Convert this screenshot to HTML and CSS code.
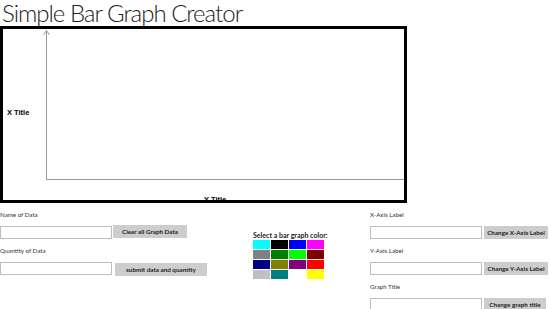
FILE: index.html
```html
<!DOCTYPE html>
<html lang="en">
<head>
  <meta charset="UTF-8">
  <title>Simple Bar Graph Creator</title>
  <link rel="stylesheet" href="styles.css">
</head>
<body>
  <h1 class="page-title">Simple Bar Graph Creator</h1>

  <div class="graph-box">
    <svg class="graph" width="401" height="171" viewBox="0 0 401 171">
      <line x1="43.5" y1="2" x2="43.5" y2="150.5" stroke="#9a9a9a" stroke-width="1"/>
      <line x1="43" y1="150.5" x2="401" y2="150.5" stroke="#9a9a9a" stroke-width="1"/>
      <path d="M40.5 6 L43.5 1.5 L46.5 6" fill="none" stroke="#9a9a9a" stroke-width="1"/>
      <text x="4" y="86" class="axis-title">X Title</text>
      <text x="201" y="173" class="axis-title">Y Title</text>
    </svg>
  </div>

  <div class="controls">
    <div class="col col-data">
      <div class="field-label">Name of Data</div>
      <div class="field-row">
        <input type="text" class="text-input">
        <button class="btn">Clear all Graph Data</button>
      </div>
      <div class="field-label">Quantity of Data</div>
      <div class="field-row">
        <input type="text" class="text-input">
        <button class="btn btn-submit">submit data and quantity</button>
      </div>
    </div>

    <div class="col col-colors">
      <div class="colors-title">Select a bar graph color:</div>
      <div class="swatches">
        <div class="swatch" style="background:#00ffff"></div>
        <div class="swatch" style="background:#000000"></div>
        <div class="swatch" style="background:#0000ff"></div>
        <div class="swatch" style="background:#ff00ff"></div>
        <div class="swatch" style="background:#808080"></div>
        <div class="swatch" style="background:#008000"></div>
        <div class="swatch" style="background:#00ff00"></div>
        <div class="swatch" style="background:#800000"></div>
        <div class="swatch" style="background:#000080"></div>
        <div class="swatch" style="background:#808000"></div>
        <div class="swatch" style="background:#800080"></div>
        <div class="swatch" style="background:#ff0000"></div>
        <div class="swatch" style="background:#c0c0c0"></div>
        <div class="swatch" style="background:#008080"></div>
        <div class="swatch" style="background:#ffffff"></div>
        <div class="swatch" style="background:#ffff00"></div>
      </div>
    </div>

    <div class="col col-labels">
      <div class="field-label">X-Axis Label</div>
      <div class="field-row">
        <input type="text" class="text-input">
        <button class="btn">Change X-Axis Label</button>
      </div>
      <div class="field-label">Y-Axis Label</div>
      <div class="field-row">
        <input type="text" class="text-input">
        <button class="btn">Change Y-Axis Label</button>
      </div>
      <div class="field-label">Graph Title</div>
      <div class="field-row">
        <input type="text" class="text-input">
        <button class="btn btn-narrow">Change graph title</button>
      </div>
    </div>
  </div>
</body>
</html>
```

FILE: styles.css
```css
body {
  margin: 0;
  background-color: #ffffff;
  color: #333333;
  font-family: 'Lato', 'Open Sans', sans-serif;
  overflow: hidden;
}

.page-title {
  margin: 0 0 0 2px;
  height: 26px;
  line-height: 26px;
  font-size: 24px;
  font-weight: 300;
  letter-spacing: -1px;
  color: #222222;
  position: relative;
  z-index: 1;
}

/* graph canvas */
.graph-box {
  width: 401px;
  height: 171px;
  border: 3px solid #000000;
  background: #ffffff;
  overflow: hidden;
}
.graph {
  display: block;
}
.axis-title {
  font-family: 'Liberation Sans', Arial, sans-serif;
  font-size: 7.5px;
  font-weight: bold;
  fill: #000000;
}

/* form area */
.controls {
  display: flex;
  margin-top: 6px;
}
.col-data {
  width: 253px;
}
.col-colors {
  width: 117px;
  padding-top: 22px;
}
.col-labels {
  flex: 1;
}
.field-label {
  height: 12px;
  line-height: 12px;
  font-size: 6.2px;
  color: #333333;
  margin-bottom: 5px;
}
.field-row {
  display: flex;
  align-items: flex-start;
  height: 13px;
  margin-bottom: 6px;
}
.text-input {
  width: 112px;
  height: 13px;
  box-sizing: border-box;
  border: 1px solid #bdbdbd;
  padding: 0;
  margin: 0;
  background: #ffffff;
}
.btn {
  height: 13px;
  box-sizing: border-box;
  border: none;
  background: #cdcdcd;
  color: #222222;
  font-family: 'Lato', 'Open Sans', sans-serif;
  font-size: 6.3px;
  font-weight: bold;
  white-space: nowrap;
  padding: 0;
  margin: -1px 0 0 1px;
  width: 74px;
}
.btn-submit {
  width: 92px;
  margin: 1px 0 0 3px;
}
.col-labels .btn {
  width: 64px;
  margin: 0 0 0 2px;
}
.col-labels .btn-narrow {
  width: 62px;
}

.colors-title {
  font-size: 7px;
  font-weight: bold;
  color: #222222;
  line-height: 9px;
  white-space: nowrap;
}
.swatches {
  display: grid;
  grid-template-columns: repeat(4, 17px);
  grid-auto-rows: 9px;
  gap: 1px;
}
```
